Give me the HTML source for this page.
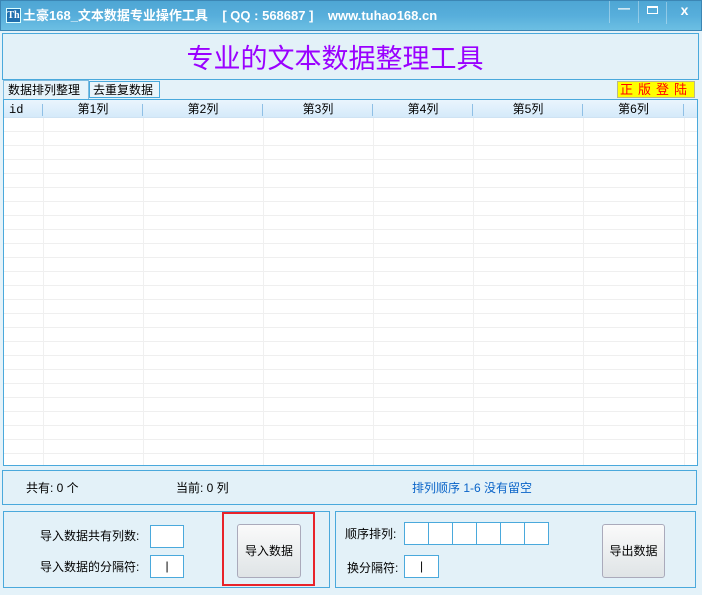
<!DOCTYPE html>
<html><head><meta charset="utf-8">
<style>
*{margin:0;padding:0;box-sizing:border-box}
body{width:702px;height:595px;overflow:hidden;background:#e4f2f9;font-family:"Liberation Sans","Noto Sans CJK SC",sans-serif;font-size:12px;color:#000;position:relative;line-height:1.2}
.abs{position:absolute}
#tb{left:0;top:0;width:702px;height:31px;background:linear-gradient(180deg,#4ea6d4 0%,#57aedb 50%,#6cbfe3 100%);border:1px solid #3c86b4}
#tb .t{left:22px;top:7px;color:#fff;font-weight:bold;font-size:13px;white-space:pre}
#ico{left:5px;top:7px;width:15px;height:15px;background:#1f6fae;border:1px solid #dff;color:#fff;font:bold 10px "Liberation Serif",serif;line-height:13px;text-align:center}
.wb{top:0;height:22px;border-left:1px solid rgba(255,255,255,.35);color:#fff;text-align:center;font-weight:bold}
.panel{background:#e3f1f8;border:1px solid #4aa9dc}
#grid{left:3px;top:99px;width:695px;height:367px;background:#fff;border:1px solid #4aa9dc;overflow:hidden}
#hdr{left:0;top:0;width:100%;height:18px;background:linear-gradient(#eaf5fd,#d5eafa);border-bottom:1px solid #cfe3f3}
.h{top:2px;text-align:center;font-size:12px}
.vl{top:0;width:1px;background:#f0f0f0;height:367px}
.hl{top:4px;width:1px;height:12px;background:#8fc0e6}
.rows{left:0;top:18px;width:100%;height:350px;background:repeating-linear-gradient(180deg,#fff 0,#fff 13px,#efefef 13px,#efefef 14px)}
.inp{background:#fff;border:1px solid #4aa9dc}
.btn{background:linear-gradient(#fafafa,#dfe4e6);border:1px solid #aab;border-radius:3px;text-align:center;font-size:12px}
</style></head><body>
<div id="tb" class="abs">
 <div id="ico" class="abs">Th</div>
 <div class="abs t">土豪168_文本数据专业操作工具    [ QQ : 568687 ]    www.tuhao168.cn</div>
 <div class="abs wb" style="left:608px;width:29px;">&#8212;</div>
 <div class="abs wb" style="left:637px;width:28px;"><div style="margin:5px auto 0;width:11px;height:8px;border:1px solid #fff;border-top-width:2px"></div></div>
 <div class="abs wb" style="left:665px;width:36px;top:1px;font-size:14px">x</div>
</div>
<div class="abs panel" style="left:2px;top:33px;width:697px;height:47px;"></div>
<div class="abs" style="left:0;top:45px;width:670px;text-align:center;color:#9a00ff;font-size:27px;line-height:1.1">专业的文本数据整理工具</div>
<div class="abs" style="left:3px;top:80px;width:86px;height:19px;background:#e6f3fa;border:1px solid #7fbce0;border-bottom:none;font-size:12px;padding:0 0 0 4px;line-height:18px">数据排列整理</div>
<div class="abs" style="left:89px;top:81px;width:71px;height:17px;background:#eaf5fb;border:1px solid #4aa9dc;font-size:12px;padding:0 0 0 3px;line-height:16px">去重复数据</div>
<div class="abs" style="left:617px;top:81px;width:78px;height:17px;background:#ffff00;border:1px solid #b9b98a;color:#f00;font-size:13px;text-align:center;letter-spacing:5px;line-height:15px">正版登陆</div>
<div id="grid" class="abs">
 <div class="abs rows"></div>
 <div class="abs vl" style="left:39px"></div><div class="abs vl" style="left:139px"></div><div class="abs vl" style="left:259px"></div><div class="abs vl" style="left:369px"></div><div class="abs vl" style="left:469px"></div><div class="abs vl" style="left:579px"></div><div class="abs vl" style="left:680px"></div>
 <div id="hdr" class="abs">
  <div class="abs h" style="left:5px;top:3px;font-family:'Liberation Mono',monospace">id</div>
  <div class="abs hl" style="left:38px"></div><div class="abs hl" style="left:138px"></div><div class="abs hl" style="left:258px"></div><div class="abs hl" style="left:368px"></div><div class="abs hl" style="left:468px"></div><div class="abs hl" style="left:578px"></div><div class="abs hl" style="left:679px"></div>
  <div class="abs h" style="left:39px;width:100px">第1列</div>
  <div class="abs h" style="left:139px;width:120px">第2列</div>
  <div class="abs h" style="left:259px;width:110px">第3列</div>
  <div class="abs h" style="left:369px;width:100px">第4列</div>
  <div class="abs h" style="left:469px;width:110px">第5列</div>
  <div class="abs h" style="left:579px;width:101px">第6列</div>
 </div>
</div>
<div class="abs panel" style="left:2px;top:470px;width:695px;height:35px;"></div>
<div class="abs" style="left:26px;top:481px">共有: 0 个</div>
<div class="abs" style="left:176px;top:481px">当前: 0 列</div>
<div class="abs" style="left:412px;top:481px;color:#0a64c8">排列顺序 1-6 没有留空</div>
<div class="abs panel" style="left:3px;top:511px;width:327px;height:77px;"></div>
<div class="abs panel" style="left:335px;top:511px;width:361px;height:77px;"></div>
<div class="abs" style="left:40px;top:529px">导入数据共有列数:</div>
<div class="abs" style="left:40px;top:560px">导入数据的分隔符:</div>
<div class="abs inp" style="left:150px;top:525px;width:34px;height:23px"></div>
<div class="abs inp" style="left:150px;top:555px;width:34px;height:23px;text-align:center;line-height:20px">|</div>
<div class="abs" style="left:222px;top:512px;width:93px;height:74px;border:2px solid #e8232a"></div>
<div class="abs btn" style="left:237px;top:524px;width:64px;height:54px;line-height:52px">导入数据</div>
<div class="abs" style="left:345px;top:527px">顺序排列:</div>
<div class="abs" style="left:347px;top:561px">换分隔符:</div>
<div class="abs inp" style="left:404px;top:522px;width:145px;height:23px;background:linear-gradient(90deg,transparent 23px,#4aa9dc 23px,#4aa9dc 24px,transparent 24px,transparent 47px,#4aa9dc 47px,#4aa9dc 48px,transparent 48px,transparent 71px,#4aa9dc 71px,#4aa9dc 72px,transparent 72px,transparent 95px,#4aa9dc 95px,#4aa9dc 96px,transparent 96px,transparent 119px,#4aa9dc 119px,#4aa9dc 120px,transparent 120px),#fff"></div>
<div class="abs inp" style="left:404px;top:555px;width:35px;height:23px;text-align:center;line-height:20px">|</div>
<div class="abs btn" style="left:602px;top:524px;width:63px;height:54px;line-height:52px">导出数据</div>
</body></html>
